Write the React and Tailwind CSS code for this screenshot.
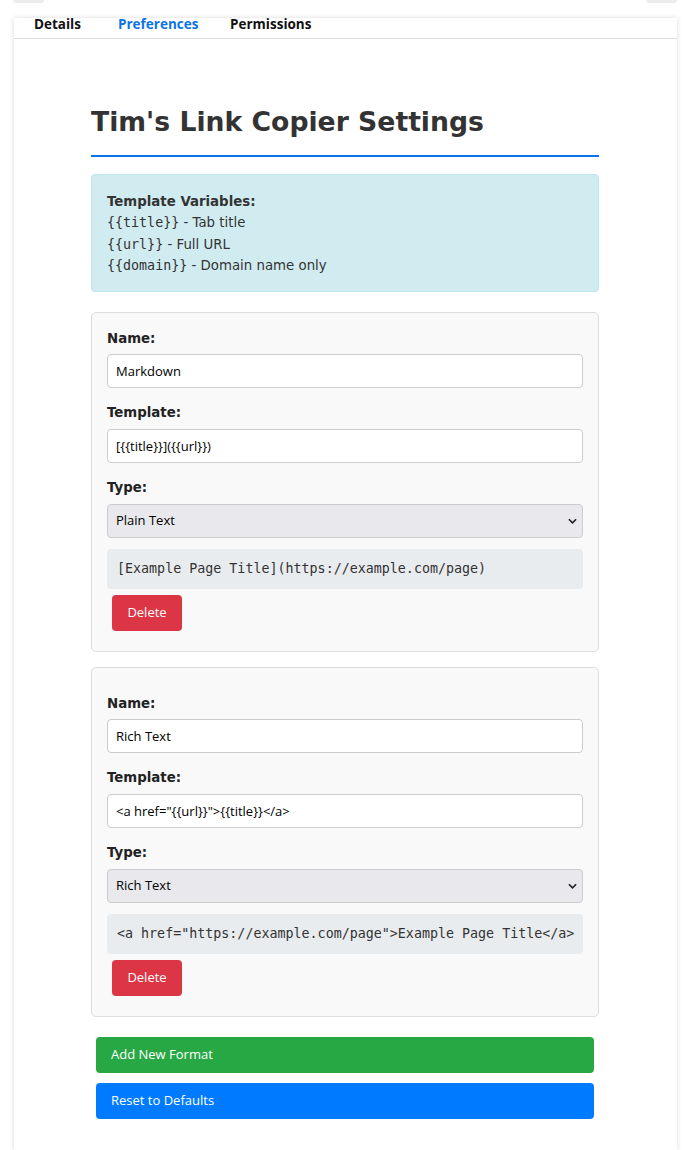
import React from 'react';

// ─── Constants ────────────────────────────────────────────────────────────────

const UI_FONT   = "font-['Open_Sans',sans-serif]";
const BODY_FONT = "font-['DejaVu_Sans',sans-serif]";
const MONO_FONT = "font-['DejaVu_Sans_Mono',monospace]";

const FORMATS = [
    {
        name: "Markdown",
        template: "[{{title}}]({{url}})",
        type: "Plain Text",
        preview: "[Example Page Title](https://example.com/page)",
        extraTop: false,
    },
    {
        name: "Rich Text",
        template: '<a href="{{url}}">{{title}}</a>',
        type: "Rich Text",
        preview: '<a href="https://example.com/page">Example Page Title</a>',
        extraTop: true,
    },
];

// ─── Pieces ──────────────────────────────────────────────────────────────────

function Field({ label, children, last = false, tight = false }) {
    return (
        <div className={last ? "" : "mb-[14px]"}>
            <label
                className={[
                    `block ${BODY_FONT} font-bold text-[13.33px] leading-[21px] text-[#222]`,
                    tight ? "mb-[5px]" : "mb-[6px]",
                ].join(" ")}
            >
                {label}
            </label>
            {children}
        </div>
    );
}

function FormatCard({ format }) {
    return (
        <div
            className={[
                "border border-[#ddd] bg-[#f9f9f9] rounded-[5px] px-[15px] pb-[20px]",
                format.extraTop ? "pt-[25px]" : "pt-[15px]",
            ].join(" ")}
        >
            <Field label="Name:" tight>
                <input
                    type="text"
                    defaultValue={format.name}
                    className={`block w-full h-[34px] bg-white border border-[#ccc] rounded-[4px] px-[8px] text-[13px] text-black ${UI_FONT}`}
                />
            </Field>

            <Field label="Template:">
                <input
                    type="text"
                    defaultValue={format.template}
                    className={`block w-full h-[34px] bg-white border border-[#ccc] rounded-[4px] px-[8px] text-[13px] text-black ${UI_FONT}`}
                />
            </Field>

            <Field label="Type:" last>
                <div className="relative">
                    <select
                        defaultValue={format.type}
                        className={`block w-full h-[34px] appearance-none bg-[#e9e9ed] border border-[#ccc] rounded-[4px] pl-[8px] pr-[24px] text-[13px] text-black ${UI_FONT}`}
                    >
                        <option>Plain Text</option>
                        <option>Rich Text</option>
                    </select>
                    {/* chevron */}
                    <svg
                        viewBox="0 0 10 6"
                        className="absolute right-[6px] top-[14px] w-[9px] h-[6px] pointer-events-none"
                    >
                        <path d="M1 1 L5 5 L9 1" fill="none" stroke="#222" strokeWidth="1.8" />
                    </svg>
                </div>
            </Field>

            <div className={`mt-[11px] bg-[#e9ecef] rounded-[4px] px-[10px] py-[10px] ${MONO_FONT} text-[13.33px] leading-[20px] text-[#333] whitespace-nowrap overflow-hidden`}>
                {format.preview}
            </div>

            <button className={`mt-[6px] ml-[5px] h-[36px] w-[70px] bg-[#dc3545] text-white rounded-[4px] text-[13px] ${UI_FONT}`}>
                Delete
            </button>
        </div>
    );
}

// ─── Component ───────────────────────────────────────────────────────────────

export default function App() {
    return (
        <div className="min-h-[1150px] bg-white">

            {/* Bits of whatever sits above */}
            <div className="flex justify-between pl-[13px] pr-[17px] h-[18px]">
                <div className="w-[31px] h-[3px] bg-[#ececec] rounded-b-[3px]" />
                <div className="w-[31px] h-[3px] bg-[#ececec] rounded-b-[3px]" />
            </div>

            {/* Panel */}
            <div className="ml-[14px] w-[663px] min-h-[1132px] bg-white shadow-[0_0_5px_rgba(0,0,0,0.15)]">

                {/* Tabs */}
                <div className={`flex h-[21px] border-b border-[#ddd] pl-[20px] ${UI_FONT} font-bold text-[13.5px] leading-[13px] text-[#111]`}>
                    <span className="w-[84px]">Details</span>
                    <span className="w-[112px] text-[#0b72e8]">Preferences</span>
                    <span>Permissions</span>
                </div>

                <div className="w-[508px] ml-[77px] pt-[67px]">
                    <h1 className={`${BODY_FONT} font-bold text-[26.67px] leading-[32px] text-[#333] pb-[17px] border-b-2 border-[#0a74ea]`}>
                        Tim's Link Copier Settings
                    </h1>

                    {/* Variables help */}
                    <div className={`mt-[17px] bg-[#d1ecf1] border border-[#bee5eb] rounded-[4px] px-[15px] pt-[16px] pb-[15px] ${BODY_FONT} text-[13.33px] leading-[21.3px] text-[#333]`}>
                        <strong className="font-bold">Template Variables:</strong><br />
                        <code className={`${MONO_FONT} text-[13.33px]`}>{"{{title}}"}</code> - Tab title<br />
                        <code className={`${MONO_FONT} text-[13.33px]`}>{"{{url}}"}</code> - Full URL<br />
                        <code className={`${MONO_FONT} text-[13.33px]`}>{"{{domain}}"}</code> - Domain name only
                    </div>

                    {/* Formats */}
                    <div className="mt-[20px] flex flex-col gap-[15px]">
                        {FORMATS.map(f => <FormatCard key={f.name} format={f} />)}
                    </div>

                    {/* Actions */}
                    <div className={`mt-[20px] mx-[5px] flex flex-col gap-[10px] ${UI_FONT} text-[13px] text-white`}>
                        <button className="h-[36px] bg-[#28a745] rounded-[4px] text-left pl-[15px]">
                            Add New Format
                        </button>
                        <button className="h-[36px] bg-[#007bff] rounded-[4px] text-left pl-[15px]">
                            Reset to Defaults
                        </button>
                    </div>
                </div>
            </div>
        </div>
    );
}
